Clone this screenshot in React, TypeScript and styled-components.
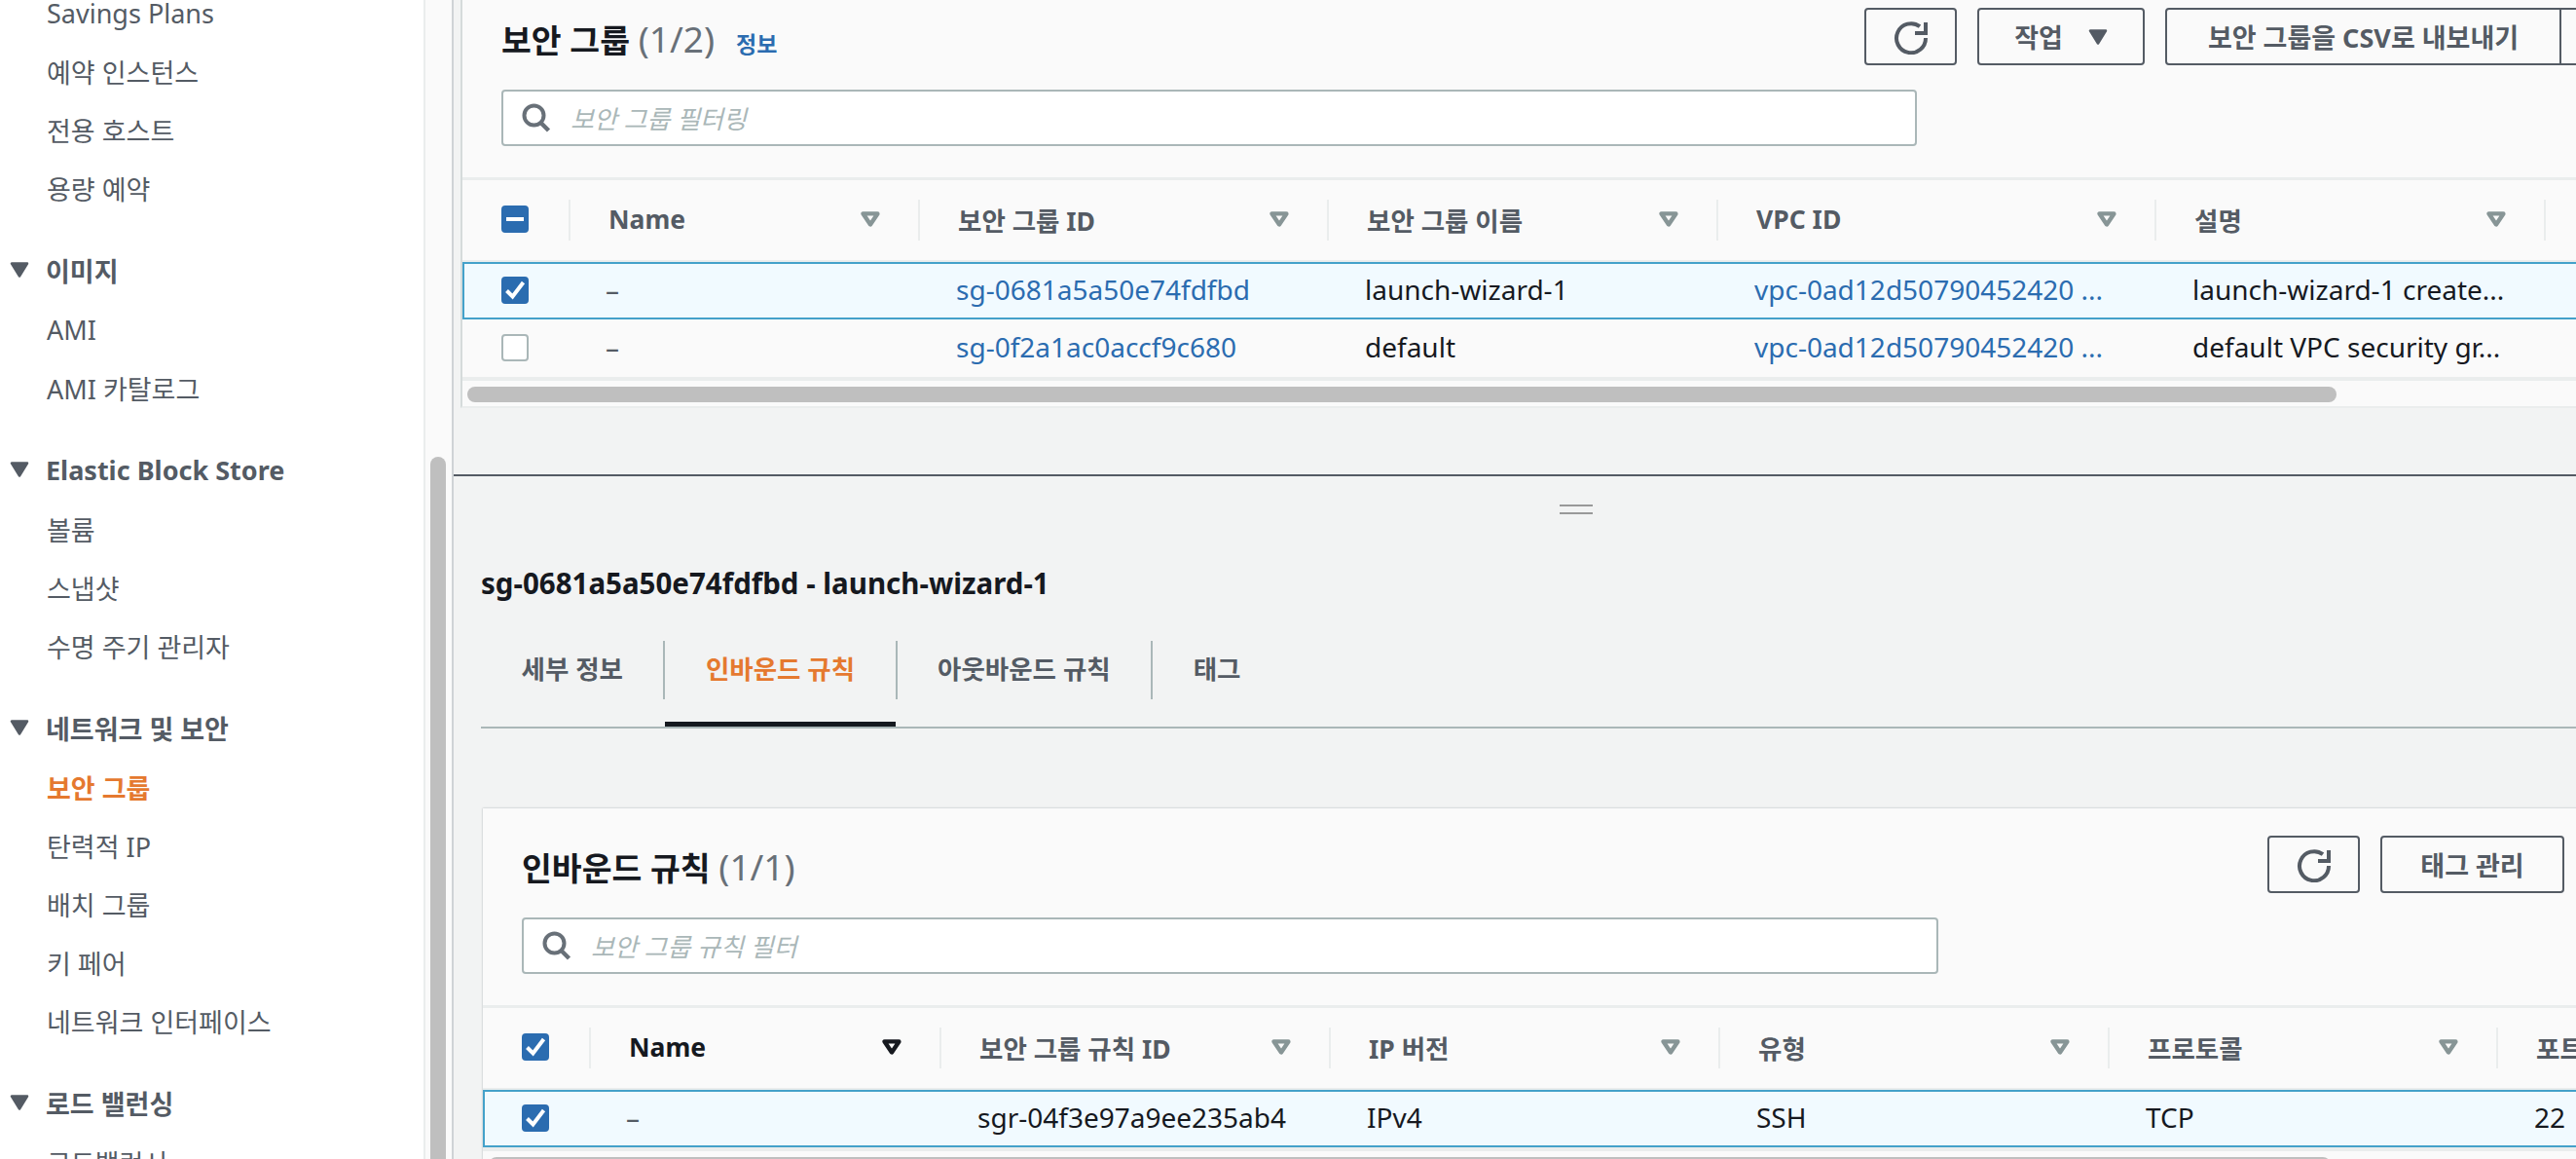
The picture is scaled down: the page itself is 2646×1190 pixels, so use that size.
import styled, { createGlobalStyle } from "styled-components";

const COLOR = {
  text: "#16191f",
  label: "#545b64",
  muted: "#687078",
  link: "#2b6cb0",
  orange: "#e5792f",
  line: "#eaeded",
  border: "#aab7b8",
  selected: "#44a1ca",
  selectedBg: "#f1faff",
  panel: "#fafafa",
  page: "#f2f3f3",
  thumb: "#bfbfbf",
};

const GlobalStyle = createGlobalStyle`
  html, body {
    margin: 0;
    padding: 0;
    background: ${COLOR.page};
  }
  * {
    box-sizing: border-box;
  }
  body {
    font-family: "Noto Sans", "Noto Sans CJK KR", sans-serif;
    font-size: 27px;
    color: ${COLOR.text};
  }
`;

const NAV = [
  { items: ["Savings Plans", "예약 인스턴스", "전용 호스트", "용량 예약"] },
  { title: "이미지", items: ["AMI", "AMI 카탈로그"] },
  { title: "Elastic Block Store", items: ["볼륨", "스냅샷", "수명 주기 관리자"] },
  {
    title: "네트워크 및 보안",
    items: ["보안 그룹", "탄력적 IP", "배치 그룹", "키 페어", "네트워크 인터페이스"],
  },
  { title: "로드 밸런싱", items: ["로드밸런서"] },
];

const TOP_COLUMNS = "109px 359px 420px 400px 450px 400px 1fr";
const BOTTOM_COLUMNS = "109px 360px 400px 400px 400px 399px 1fr";

const CaretDown = () => (
  <svg width="20" height="16" viewBox="0 0 20 16">
    <path d="M2 1.5h16L10 14.5z" fill="currentColor" stroke="currentColor" strokeWidth="2.5" strokeLinejoin="round" />
  </svg>
);

const SortIcon = () => (
  <svg width="20" height="16" viewBox="0 0 20 16">
    <path d="M2.6 2.4h14.8L10 13.4z" fill="none" stroke="currentColor" strokeWidth="4.4" strokeLinejoin="round" />
  </svg>
);

const RefreshIcon = () => (
  <svg width="36" height="36" viewBox="0 0 36 36" fill="none" stroke="currentColor" strokeWidth="4">
    <path d="M27 7.2A15 15 0 1 0 33 19" />
    <path d="M33 3v11H22" />
  </svg>
);

const SearchIcon = () => (
  <svg width="30" height="30" viewBox="0 0 30 30" fill="none" stroke="currentColor">
    <circle cx="12.5" cy="12.5" r="10" strokeWidth="4" />
    <path d="M19.5 20l8 8" strokeWidth="4.5" />
  </svg>
);

const Check = ({ mark }: { mark?: "check" | "dash" }) => (
  <CheckBox $on={!!mark}>
    {mark === "check" && (
      <svg width="22" height="22" viewBox="0 0 22 22" fill="none" stroke="#fff" strokeWidth="4">
        <path d="M2.5 11.5l6 6L19.5 3" />
      </svg>
    )}
    {mark === "dash" && <DashMark />}
  </CheckBox>
);

const Head = ({ label, active }: { label: string; active?: boolean }) => (
  <HeadCell $active={active}>
    <span>{label}</span>
    <SortMark $active={active}>
      <SortIcon />
    </SortMark>
  </HeadCell>
);

const Search = ({ placeholder, width }: { placeholder: string; width: number }) => (
  <SearchBox $width={width}>
    <SearchGlyph>
      <SearchIcon />
    </SearchGlyph>
    <Placeholder>{placeholder}</Placeholder>
  </SearchBox>
);

const App = () => {
  return (
    <Shell>
      <GlobalStyle />
      <Sidebar>
        <NavList>
          {NAV.map((group, i) => (
            <NavGroup key={i} $first={i === 0}>
              {group.title && (
                <NavTitle>
                  <NavCaret>
                    <CaretDown />
                  </NavCaret>
                  {group.title}
                </NavTitle>
              )}
              {group.items.map((item) => (
                <NavItem key={item} $active={item === "보안 그룹"}>
                  {item}
                </NavItem>
              ))}
            </NavGroup>
          ))}
        </NavList>
      </Sidebar>
      <Gutter>
        <GutterThumb />
      </Gutter>

      <Main>
        <TopPanel>
          <PanelHead>
            <TitleRow>
              <Title>
                보안 그룹 <Count>(1/2)</Count>
                <Info>정보</Info>
              </Title>
              <Actions>
                <IconButton>
                  <RefreshIcon />
                </IconButton>
                <Button $width={172}>
                  작업
                  <ButtonCaret>
                    <CaretDown />
                  </ButtonCaret>
                </Button>
                <SplitGroup>
                  <SplitLeft>보안 그룹을 CSV로 내보내기</SplitLeft>
                  <SplitRight />
                </SplitGroup>
              </Actions>
            </TitleRow>
            <Search placeholder="보안 그룹 필터링" width={1454} />
          </PanelHead>

          <HeadRow $columns={TOP_COLUMNS}>
            <CheckCell>
              <Check mark="dash" />
            </CheckCell>
            <Head label="Name" />
            <Head label="보안 그룹 ID" />
            <Head label="보안 그룹 이름" />
            <Head label="VPC ID" />
            <Head label="설명" />
            <HeadCell />
          </HeadRow>
          <Row $columns={TOP_COLUMNS} $selected>
            <CheckCell>
              <Check mark="check" />
            </CheckCell>
            <DashCell>–</DashCell>
            <Cell $link>sg-0681a5a50e74fdfbd</Cell>
            <Cell>launch-wizard-1</Cell>
            <Cell $link>vpc-0ad12d50790452420 ...</Cell>
            <Cell>launch-wizard-1 create...</Cell>
          </Row>
          <Row $columns={TOP_COLUMNS}>
            <CheckCell>
              <Check />
            </CheckCell>
            <DashCell>–</DashCell>
            <Cell $link>sg-0f2a1ac0accf9c680</Cell>
            <Cell>default</Cell>
            <Cell $link>vpc-0ad12d50790452420 ...</Cell>
            <Cell>default VPC security gr...</Cell>
          </Row>
          <ScrollTrack $offset={5}>
            <ScrollThumb $width={1920} />
          </ScrollTrack>
        </TopPanel>

        <Divider />

        <Detail>
          <Handle />
          <DetailTitle>sg-0681a5a50e74fdfbd - launch-wizard-1</DetailTitle>
          <TabBar>
            <Tab>세부 정보</Tab>
            <TabDivider />
            <Tab $active>인바운드 규칙</Tab>
            <TabDivider />
            <Tab>아웃바운드 규칙</Tab>
            <TabDivider />
            <Tab>태그</Tab>
          </TabBar>

          <Card>
            <PanelHead $inner>
              <TitleRow>
                <Title>
                  인바운드 규칙 <Count>(1/1)</Count>
                </Title>
                <Actions>
                  <IconButton>
                    <RefreshIcon />
                  </IconButton>
                  <Button $width={189}>태그 관리</Button>
                </Actions>
              </TitleRow>
              <Search placeholder="보안 그룹 규칙 필터" width={1455} />
            </PanelHead>

            <HeadRow $columns={BOTTOM_COLUMNS}>
              <CheckCell>
                <Check mark="check" />
              </CheckCell>
              <Head label="Name" active />
              <Head label="보안 그룹 규칙 ID" />
              <Head label="IP 버전" />
              <Head label="유형" />
              <Head label="프로토콜" />
              <HeadCell>
                <span>포트 범위</span>
              </HeadCell>
            </HeadRow>
            <Row $columns={BOTTOM_COLUMNS} $selected>
              <CheckCell>
                <Check mark="check" />
              </CheckCell>
              <DashCell>–</DashCell>
              <Cell>sgr-04f3e97a9ee235ab4</Cell>
              <Cell>IPv4</Cell>
              <Cell>SSH</Cell>
              <Cell>TCP</Cell>
              <Cell>22</Cell>
            </Row>
            <ScrollTrack $offset={6}>
              <ScrollThumb $width={1892} />
            </ScrollTrack>
          </Card>
        </Detail>
      </Main>
    </Shell>
  );
};

const Shell = styled.div`
  display: flex;
  width: 2646px;
  height: 1190px;
  overflow: hidden;
  background: ${COLOR.page};
`;

const Sidebar = styled.nav`
  flex: 0 0 435px;
  background: #fff;
  overflow: hidden;
`;

const NavList = styled.div`
  margin-top: -17px;
  display: flex;
  flex-direction: column;
`;

const NavGroup = styled.div<{ $first?: boolean }>`
  margin-top: ${(p) => (p.$first ? 0 : 23)}px;
`;

const NavTitle = styled.div`
  display: flex;
  align-items: center;
  height: 62px;
  padding-left: 10px;
  font-weight: 700;
  color: ${COLOR.label};
`;

const NavCaret = styled.span`
  display: flex;
  margin-right: 17px;
`;

const NavItem = styled.div<{ $active?: boolean }>`
  display: flex;
  align-items: center;
  height: 60px;
  padding-left: 48px;
  color: ${(p) => (p.$active ? COLOR.orange : COLOR.label)};
  font-weight: ${(p) => (p.$active ? 700 : 400)};
  white-space: nowrap;
`;

const Gutter = styled.div`
  flex: 0 0 31px;
  padding: 469px 0 0 5px;
  background: ${COLOR.panel};
  border-left: 2px solid ${COLOR.line};
  border-right: 2px solid #cfd3d6;
`;

const GutterThumb = styled.div`
  width: 16px;
  height: 800px;
  border-radius: 8px;
  background: ${COLOR.thumb};
`;

const Main = styled.main`
  flex: 0 0 2225px;
  display: flex;
  flex-direction: column;
  min-width: 0;
`;

const TopPanel = styled.section`
  flex: 0 0 419px;
  width: 2225px;
  margin-left: 7px;
  background: ${COLOR.panel};
  border-left: 2px solid #d5dbdb;
  border-bottom: 2px solid ${COLOR.line};
`;

const PanelHead = styled.div<{ $inner?: boolean }>`
  display: flex;
  flex-direction: column;
  gap: 25px;
  padding: ${(p) => (p.$inner ? "28px 57px 32px 40px" : "8px 0 32px 40px")};
`;

const TitleRow = styled.div`
  display: flex;
  align-items: flex-start;
  justify-content: space-between;
  height: 59px;
`;

const Title = styled.h2`
  margin: 0;
  font-size: 33.5px;
  line-height: 63px;
  font-weight: 700;
  color: ${COLOR.text};
  white-space: nowrap;
`;

const Count = styled.span`
  font-size: 37px;
  font-weight: 400;
  color: ${COLOR.muted};
`;

const Info = styled.a`
  margin-left: 22px;
  font-size: 23px;
  font-weight: 700;
  color: ${COLOR.link};
`;

const Actions = styled.div`
  display: flex;
  gap: 21px;
`;

const Button = styled.button<{ $width: number }>`
  display: flex;
  align-items: center;
  justify-content: center;
  width: ${(p) => p.$width}px;
  height: 59px;
  padding: 0;
  background: ${COLOR.panel};
  border: 2px solid ${COLOR.label};
  border-radius: 4px;
  font: inherit;
  font-weight: 700;
  color: ${COLOR.label};
`;

const IconButton = styled(Button).attrs({ $width: 95 })``;

const ButtonCaret = styled.span`
  display: flex;
  margin-left: 26px;
`;

const SplitGroup = styled.div`
  display: flex;
`;

const SplitLeft = styled(Button).attrs({ $width: 407 })`
  border-radius: 4px 0 0 4px;
  white-space: nowrap;
`;

const SplitRight = styled(Button).attrs({ $width: 67 })`
  border-left: 0;
  border-radius: 0 4px 4px 0;
`;

const SearchBox = styled.div<{ $width: number }>`
  display: flex;
  align-items: center;
  gap: 20px;
  width: ${(p) => p.$width}px;
  height: 58px;
  padding-left: 19px;
  background: #fff;
  border: 2px solid ${COLOR.border};
  border-radius: 4px;
`;

const SearchGlyph = styled.span`
  display: flex;
  color: ${COLOR.muted};
`;

const Placeholder = styled.span`
  font-size: 26px;
  font-style: italic;
  color: ${COLOR.border};
`;

const HeadRow = styled.div<{ $columns: string }>`
  display: grid;
  grid-template-columns: ${(p) => p.$columns};
  align-items: center;
  height: 87px;
  font-size: 26.5px;
  border-top: 3px solid ${COLOR.line};
  border-bottom: 2px solid ${COLOR.line};
`;

const Row = styled.div<{ $columns: string; $selected?: boolean }>`
  display: grid;
  grid-template-columns: ${(p) => p.$columns};
  align-items: center;
  height: 59px;
  font-size: 28px;
  background: ${(p) => (p.$selected ? COLOR.selectedBg : "transparent")};
  box-shadow: ${(p) => (p.$selected ? `inset 0 0 0 2px ${COLOR.selected}` : "none")};
`;

const CheckCell = styled.div`
  display: flex;
  padding: 0 0 2px 40px;
`;

const CheckBox = styled.span<{ $on: boolean }>`
  display: flex;
  align-items: center;
  justify-content: center;
  width: 28px;
  height: 28px;
  border-radius: 4px;
  background: ${(p) => (p.$on ? COLOR.link : "#fff")};
  border: 2px solid ${(p) => (p.$on ? COLOR.link : COLOR.border)};
`;

const DashMark = styled.span`
  width: 18px;
  height: 4px;
  background: #fff;
`;

const HeadCell = styled.div<{ $active?: boolean }>`
  display: flex;
  align-items: center;
  justify-content: space-between;
  height: 42px;
  padding: 0 39px 2px;
  border-left: 2px solid ${COLOR.line};
  font-weight: 700;
  white-space: nowrap;
  color: ${(p) => (p.$active ? COLOR.text : COLOR.label)};
`;

const SortMark = styled.span<{ $active?: boolean }>`
  display: flex;
  color: ${(p) => (p.$active ? COLOR.text : "#879596")};
`;

const Cell = styled.div<{ $link?: boolean }>`
  padding: 0 0 3px 39px;
  white-space: nowrap;
  color: ${(p) => (p.$link ? COLOR.link : COLOR.text)};
`;

const DashCell = styled(Cell)`
  padding-left: 38px;
  color: ${COLOR.label};
`;

const ScrollTrack = styled.div<{ $offset: number }>`
  padding: 6px 0 0 ${(p) => p.$offset}px;
  border-top: 4px solid ${COLOR.line};
`;

const ScrollThumb = styled.div<{ $width: number }>`
  width: ${(p) => p.$width}px;
  height: 16px;
  border-radius: 8px;
  background: ${COLOR.thumb};
`;

const Divider = styled.div`
  flex: 0 0 70px;
  border-bottom: 2px solid ${COLOR.label};
`;

const Detail = styled.div`
  padding: 29px 0 0 28px;
`;

const Handle = styled.div`
  width: 34px;
  height: 10px;
  margin-left: 1108px;
  border-top: 2px solid #999;
  border-bottom: 2px solid #999;
`;

const DetailTitle = styled.h3`
  margin: 53px 0 0;
  font-size: 29.5px;
  line-height: 36px;
  font-weight: 700;
  color: ${COLOR.text};
`;

const TabBar = styled.div`
  display: flex;
  align-items: stretch;
  height: 118px;
  margin-top: 13px;
  font-size: 26.5px;
  border-bottom: 2px solid ${COLOR.border};
`;

const Tab = styled.div<{ $active?: boolean }>`
  display: flex;
  align-items: center;
  height: 116px;
  padding: 0 41.5px;
  font-weight: 700;
  white-space: nowrap;
  color: ${(p) => (p.$active ? COLOR.orange : COLOR.label)};
  border-bottom: 5px solid ${(p) => (p.$active ? COLOR.text : "transparent")};
`;

const TabDivider = styled.span`
  flex: 0 0 2px;
  height: 60px;
  margin-top: 28px;
  background: ${COLOR.border};
`;

const Card = styled.section`
  margin: 82px 0 0 2px;
  background: ${COLOR.panel};
  box-shadow: 0 0 2px rgba(0, 28, 36, 0.3);
`;

export default App;
